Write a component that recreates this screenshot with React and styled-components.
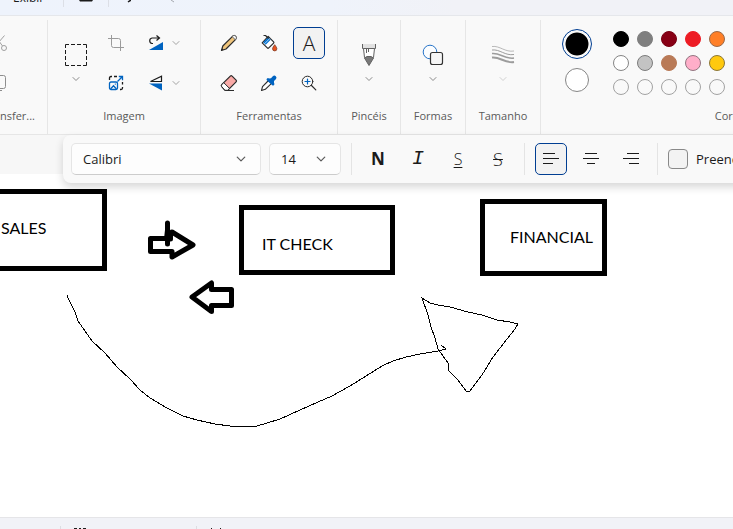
import React from "react";
import styled, { createGlobalStyle } from "styled-components";

const GlobalStyle = createGlobalStyle`
  *, *::before, *::after { box-sizing: border-box; }
  html, body { margin: 0; height: 100%; overflow: hidden; }
  body {
    font-family: "Open Sans", "Noto Sans", sans-serif;
    font-size: 12px;
    color: #1b1b1b;
  }
  button, select, input { font: inherit; color: inherit; margin: 0; }
  svg { display: block; flex: none; }
`;

const Window = styled.div`
  display: flex;
  flex-direction: column;
  height: 100vh;
  overflow: hidden;
  background: #fff;
`;

/* ---------- title strip ---------- */

const MenuStrip = styled.header`
  display: flex;
  align-items: flex-start;
  height: 16px;
  flex: none;
  overflow: hidden;
  border-bottom: 1px solid #e5e7eb;
  background: linear-gradient(90deg, #eef3fc 0%, #eff3fb 45%, #f1f2f7 62%);
`;

const MenuButton = styled.button`
  width: 63px;
  height: 16px;
  margin-top: -10px;
  padding: 0 0 0 13px;
  border: 0;
  background: none;
  line-height: 16px;
  text-align: left;
`;

const StripDivider = styled.span`
  width: 1px;
  height: 7px;
  background: #dcdfe6;
`;

const StripButton = styled.button`
  display: flex;
  justify-content: center;
  width: ${(p) => p.$width || 44}px;
  height: 6px;
  padding: 0;
  border: 0;
  background: none;
  color: ${(p) => (p.$faded ? "#a5a8ae" : "#1b1b1b")};
`;

/* ---------- ribbon ---------- */

const Ribbon = styled.div`
  display: flex;
  flex: none;
  height: 119px;
  padding-top: 4px;
  overflow: hidden;
  border-bottom: 1px solid #e6e6e6;
  background: #f9f9f9;
`;

const Group = styled.section`
  display: flex;
  flex-direction: column;
  align-items: ${(p) => p.$align || "center"};
  flex: none;
  width: ${(p) => p.$width}px;
  padding-top: 3px;
  border-right: 1px solid #e6e6e6;
`;

const GroupBody = styled.div`
  display: grid;
  grid-template-columns: ${(p) => p.$columns};
  grid-template-rows: 40px 40px;
  place-items: center;
`;

const GroupLabel = styled.h2`
  margin: 5px 0 0;
  padding-right: ${(p) => (p.$end ? 12 : 0)}px;
  font-size: 11px;
  font-weight: 400;
  line-height: 16px;
  text-align: center;
  white-space: nowrap;
  color: #5a5a5a;
`;

const ToolButton = styled.button`
  display: flex;
  align-items: center;
  justify-content: center;
  width: ${(p) => (p.$narrow ? 8 : 32)}px;
  height: 32px;
  padding: 0;
  border: ${(p) => (p.$narrow ? 0 : 1)}px solid ${(p) => (p.$active ? "#003e92" : "transparent")};
  border-radius: 5px;
  background: ${(p) => (p.$active ? "#f2f2f2" : "transparent")};
  color: ${(p) => (p.$muted ? "#a2a2a2" : "#1b1b1b")};
`;

const SplitTool = styled.div`
  display: flex;
  justify-self: stretch;
  padding-left: 4px;
`;

const LetterTool = styled.span`
  font-family: "Open Sans", sans-serif;
  font-size: 21px;
  font-weight: 300;
  line-height: 24px;
  color: #1b1b1b;
`;

const TallButton = styled.button`
  display: flex;
  flex-direction: column;
  align-items: center;
  justify-content: flex-start;
  gap: 8px;
  grid-row: 1 / 3;
  width: 40px;
  height: 80px;
  padding: 20px 0 0;
  border: 0;
  background: none;
  color: ${(p) => (p.$faded ? "#d0d0d0" : "#8a8a8a")};
`;

const ColorArea = styled.div`
  display: flex;
  align-items: flex-start;
  gap: 20px;
  height: 80px;
  padding: 5px 0 0 20px;
`;

const ActiveColors = styled.div`
  display: flex;
  flex-direction: column;
  align-items: center;
  gap: 9px;
  width: 32px;
  padding-top: 1px;
`;

const Primary = styled.button`
  width: 30px;
  height: 30px;
  padding: 2px;
  border: 1px solid #003e92;
  border-radius: 50%;
  background: #000 content-box;
  background-color: #fff;
  background-image: radial-gradient(circle, #000 11px, #fff 12px);
`;

const Secondary = styled.button`
  width: 24px;
  height: 24px;
  padding: 0;
  border: 1px solid #868686;
  border-radius: 50%;
  background: #fff;
`;

const Palette = styled.div`
  display: grid;
  grid-template-columns: repeat(5, 16px);
  gap: 8px;
  padding-top: 3px;
`;

const Swatch = styled.button`
  width: 16px;
  height: 16px;
  padding: 0;
  border: 1px solid ${(p) => p.$ring || "#a2a2a2"};
  border-radius: 50%;
  background: ${(p) => p.$color || "transparent"};
`;

/* ---------- workspace ---------- */

const Workspace = styled.main`
  position: relative;
  display: flex;
  flex-direction: column;
  flex: 1;
  min-height: 0;
  padding-top: 39px;
  background: #f7f7f7;
`;

const TextBar = styled.div`
  position: absolute;
  z-index: 2;
  top: 0;
  left: 63px;
  right: -40px;
  display: flex;
  align-items: center;
  gap: 8px;
  height: 48px;
  padding-left: 8px;
  border-radius: 8px;
  background: #f9f9f9;
  box-shadow: 0 4px 9px rgba(0, 0, 0, 0.16);
`;

const SelectBox = styled.label`
  display: grid;
  align-items: center;
  flex: none;
  width: ${(p) => p.$width}px;
  height: 32px;
  border: 1px solid #e5e5e5;
  border-bottom-color: #cccccc;
  border-radius: 5px;
  background: #fdfdfd;

  select, svg { grid-area: 1 / 1; }
  select {
    width: 100%;
    height: 30px;
    padding: 0 0 0 11px;
    border: 0;
    appearance: none;
    background: none;
    font-size: 13px;
  }
  svg {
    justify-self: end;
    margin-right: 14px;
    color: #5c5c5c;
    pointer-events: none;
  }
`;

const Divider = styled.span`
  flex: none;
  width: 1px;
  height: 32px;
  margin: 0 2px;
  background: #e4e4e4;
`;

const FormatLetter = styled.span`
  font-family: ${(p) => p.$family || '"Open Sans", sans-serif'};
  font-size: ${(p) => p.$size || 17}px;
  font-weight: ${(p) => p.$weight || 300};
  font-style: ${(p) => (p.$italic ? "italic" : "normal")};
  line-height: 20px;
  text-decoration: ${(p) => p.$line || "none"};
  text-decoration-thickness: 1px;
  text-underline-offset: 2px;
`;

const FillOption = styled.label`
  display: flex;
  align-items: center;
  gap: 8px;
  flex: none;
  font-size: 13px;
  line-height: 20px;

  input {
    width: 20px;
    height: 20px;
    appearance: none;
    border: 1px solid #898989;
    border-radius: 4px;
    background: #f3f3f3;
  }
`;

const Canvas = styled.div`
  position: relative;
  flex: 1;
  overflow: hidden;
  background: #fff;
`;

const Node = styled.div`
  position: absolute;
  top: ${(p) => p.$y}px;
  left: ${(p) => p.$x}px;
  width: ${(p) => p.$w}px;
  height: ${(p) => p.$h}px;
  padding: ${(p) => p.$pad};
  border: 5px solid #000;
  color: #000;
  font-family: Lato, sans-serif;
  font-size: 16px;
  line-height: 20px;
  white-space: nowrap;
`;

const Strokes = styled.svg`
  position: absolute;
  top: 0;
  left: 0;
  fill: none;
  stroke: #000;
`;

const StatusBar = styled.footer`
  display: flex;
  align-items: flex-end;
  flex: none;
  height: 12px;
  border-top: 1px solid #e5e5e8;
  background: #f1f2f7;
`;

const StatusCell = styled.div`
  display: flex;
  align-items: flex-end;
  flex: ${(p) => (p.$width ? `0 0 ${p.$width}px` : "1")};
  height: 3px;
  padding-left: 13px;
  border-right: ${(p) => (p.$width ? "1px solid #dcdde2" : "0")};
`;

/* ---------- icons ---------- */

const Chevron = ({ size = 8 }) => (
  <svg width={size} height={size} viewBox="0 0 8 8" fill="none" stroke="currentColor" strokeLinecap="round" strokeLinejoin="round">
    <path d="M1 2.5 4 5.5 7 2.5" />
  </svg>
);

const SelectionIcon = () => (
  <svg width="24" height="24" viewBox="0 0 24 24" fill="none" stroke="#1b1b1b">
    <path d="M1.5 5V1.5H5M7 1.5h4M13 1.5h4M19 1.5h3.500V5M22.500 7v4M22.500 13v4M22.500 19v3.500H19M17 22.500h-4M11 22.500H7M5 22.500H1.500V19M1.500 17v-4M1.500 11V7" />
  </svg>
);

const CropIcon = () => (
  <svg width="16" height="16" viewBox="0 0 16 16" fill="none" stroke="#9b9b9b">
    <path d="M0 3.500h10.500q2 0 2 2V16M3.500 0v10.500q0 2 2 2H16" />
  </svg>
);

const ResizeIcon = () => (
  <svg width="16" height="16" viewBox="0 0 16 16" fill="none">
    <path d="M1.500 5V3q0-1.500 1.500-1.500h1M6 1.500h3M14.500 7v2.500M14.500 12v1q0 1.500-1.500 1.500h-1" stroke="#1b1b1b" strokeWidth="1.300" />
    <rect x="1.500" y="7" width="8" height="7.500" rx="1.500" stroke="#0063c0" strokeWidth="1.300" />
    <path d="m2.500 14 3-3.200 3 3.200M6.800 9.200h1M9.500 6.500l5-5M10.800 1.500h3.700v3.700" stroke="#0063c0" strokeWidth="1.300" />
  </svg>
);

const RotateIcon = () => (
  <svg width="16" height="16" viewBox="0 0 16 16" fill="none">
    <path d="M5 8.500H4a2.800 2.800 0 0 1 0-5.500h7.500M8.500.5l3 2.500-3 2.500" stroke="#1b1b1b" strokeWidth="1.200" />
    <path d="M15 7v8H1z" fill="#0063c0" />
  </svg>
);

const FlipIcon = () => (
  <svg width="16" height="16" viewBox="0 0 16 16" fill="none">
    <path d="M13.500 1.200v5.300h-11z" stroke="#1b1b1b" strokeWidth="1.200" />
    <path d="M14 8.500v7L1 8.500z" fill="#0063c0" />
  </svg>
);

const PencilIcon = () => (
  <svg width="18" height="18" viewBox="0 0 18 18" strokeLinejoin="round">
    <path d="m1.500 16.500 1.300-4.500L12.500 2.300q1.500-1.400 3 0t.2 3L6 15z" fill="#f0c57c" stroke="#2b2b2b" strokeWidth="1.200" />
    <path d="m12.200 2.700 1-1q1.300-.8 2.500.4t.5 2.500l-1 1z" fill="#f7f7f7" stroke="#6a6a6a" />
    <path d="m1.500 16.500.8-2.300 1.400 1.400z" fill="#2b2b2b" />
  </svg>
);

const BucketIcon = () => (
  <svg width="18" height="18" viewBox="0 0 18 18" fill="none" strokeLinejoin="round">
    <path d="m8.200 2.400 5.400 5.400q.6.700 0 1.300L8.800 13.900q-.8.700-1.500 0L2.200 8.800z" fill="#fff" stroke="#2b2b2b" strokeWidth="1.200" />
    <path d="m3.200 8.300 5-5L10.700 5.800l-5 5z" fill="#0070cf" />
    <path d="m4.600 9.700 5-5" stroke="#d7ecff" strokeWidth=".8" />
    <path d="M3.500 1.500h2l3 3" stroke="#2b2b2b" strokeWidth="1.200" />
    <path d="M14.700 10.700q2.200 2.800 2.200 4a2.200 2.200 0 0 1-4.400 0q0-1.200 2.200-4z" fill="#e85420" stroke="#74341f" strokeWidth=".7" />
  </svg>
);

const EraserIcon = () => (
  <svg width="18" height="18" viewBox="0 0 18 18" strokeLinejoin="round">
    <path d="m1.700 10.700 8.600-8.600q.9-.8 1.800 0l4 4q.9.900 0 1.800l-8.400 8.400H5l-3.300-3.700q-.7-.9 0-1.900z" fill="#f9aaa7" stroke="#2b2b2b" strokeWidth="1.200" />
    <path d="m3.800 8.700 5.700 5.700-2 1.900H5l-3.300-3.700q-.7-.9 0-1.900z" fill="#fff" stroke="#2b2b2b" />
    <path d="M6.500 16.500H14" stroke="#2b2b2b" />
  </svg>
);

const DropperIcon = () => (
  <svg width="18" height="18" viewBox="0 0 18 18" strokeLinejoin="round">
    <path d="m8.500 6.500-6 6.200-1 3.800 3.800-1.200 6.200-6z" fill="#fff" stroke="#2b2b2b" strokeWidth="1.100" />
    <path d="M7 4.500q1-1 2 0L11 4.200l1.800-2q1.500-1.500 3 0t0 3L14 7v2q1 1 0 2t-2 0L7 6.500q-1-1 0-2z" fill="#0063c0" />
  </svg>
);

const ZoomIcon = () => (
  <svg width="16" height="16" viewBox="0 0 16 16" fill="none" strokeLinecap="round">
    <circle cx="6.500" cy="6.500" r="5.300" stroke="#2b2b2b" />
    <path d="m10.500 10.500 4.300 4.300" stroke="#2b2b2b" strokeWidth="1.200" />
    <path d="M6.500 4v5M4 6.500h5" stroke="#0063c0" strokeWidth="1.200" />
  </svg>
);

const BrushIcon = () => (
  <svg width="24" height="24" viewBox="0 0 24 24" fill="none" stroke="#626262">
    <path d="M5.500 1v4.500h13V1" fill="#e1e1e1" />
    <path d="m6.500 5.500 1 9h9l1-9z" fill="#fff" />
    <path d="M7.500 15 12 22.500l4.500-7.500-2.500-1.500h-4z" fill="#797979" />
    <path d="M9.500 6v4M11.500 6v3" />
  </svg>
);

const ShapesIcon = () => (
  <svg width="24" height="24" viewBox="0 0 24 24">
    <circle cx="9" cy="9" r="6.800" fill="#fbfdff" stroke="#2673c8" />
    <rect x="9.500" y="9.500" width="12" height="12" rx="2" fill="#f6f6f6" stroke="#333" strokeWidth="1.200" />
  </svg>
);

const ThicknessIcon = () => (
  <svg width="24" height="24" viewBox="0 0 24 24" fill="none" stroke="#9c9c9c">
    <path d="M1 3.500c8-1 13 6 22 4.500" strokeWidth=".7" />
    <path d="M1 7c8-1 13 6 22 4.500" />
    <path d="M1 10.500c8-1 13 6 22 4.500" strokeWidth="1.500" />
    <path d="M1 14.500c8-1 13 6 22 4.500" strokeWidth="2" />
  </svg>
);

const ScissorsIcon = () => (
  <svg width="18" height="18" viewBox="0 0 18 18" fill="none" stroke="#a0a0a0">
    <circle cx="4" cy="14" r="2.500" /><circle cx="14" cy="14" r="2.500" />
    <path d="M5 1.500 12.500 12M14.500 1.500 5.500 12" />
  </svg>
);

const CopyIcon = () => (
  <svg width="18" height="18" viewBox="0 0 18 18" fill="none" stroke="#8d8d8d">
    <rect x="5.500" y="1.500" width="10" height="13" rx="2" /><path d="M5 4.500q-2 0-2 2v8q0 2 2 2h7" />
  </svg>
);

const ALIGN = {
  left: "M1 3.500h12M1 8.500h16M1 13.500h10",
  center: "M3 3.500h12M1 8.500h16M5 13.500h8",
  right: "M5 3.500h12M1 8.500h16M7 13.500h10",
};

const AlignIcon = ({ side }) => (
  <svg width="18" height="18" viewBox="0 0 18 18" stroke="currentColor">
    <path d={ALIGN[side]} />
  </svg>
);

/* ---------- data ---------- */

const SWATCHES = [
  ["preto", "#000000", "#000000"],
  ["cinza", "#7f7f7f", "#7f7f7f"],
  ["vermelho escuro", "#880015", "#770012"],
  ["vermelho", "#ed1c24", "#ed1c24"],
  ["laranja", "#ff7f27", "#9a6949"],
  ["branco", "#ffffff", "#858585"],
  ["cinza claro", "#c3c3c3", "#7c7c7c"],
  ["marrom", "#b97a57", "#b97a57"],
  ["rosa", "#ffaec9", "#927580"],
  ["ouro", "#ffc90e", "#8c7739"],
  ["livre 1"], ["livre 2"], ["livre 3"], ["livre 4"], ["livre 5"],
];

const TALL_GROUPS = [
  { label: "Pincéis", width: 63, Icon: BrushIcon },
  { label: "Formas", width: 65, Icon: ShapesIcon },
  { label: "Tamanho", width: 75, Icon: ThicknessIcon, faded: true },
];

const CURVE =
  "M67 295L68 298 71 304 75 312 78 321 85 331 92 341 105 353 117 367 130 379 140 390 150 398 167 408 183 416 197 420 215 424 230 426H257L267 423 280 419 300 410 318 402 332 396 350 386 366 376 382 366 393 361 406 357 420 354 438 351 446 349 441 345";

const TRIANGLE =
  "M422 298L430 303 438 305 450 307 468 312 482 315 497 320 510 322 518 324 515 329 507 339 493 357 482 375 473 387 470 391H466L458 380 449 371 448 363 438 349 435 338 431 327 428 315z";

export default function App() {
  return (
    <Window>
      <GlobalStyle />
      <MenuStrip>
        <MenuButton>Exibir</MenuButton>
        <StripDivider />
        <StripButton aria-label="Salvar">
          <svg width="14" height="3" viewBox="0 0 14 3"><path d="M0 0h14L13 1.500H1z" fill="currentColor" /></svg>
        </StripButton>
        <StripDivider />
        <StripButton aria-label="Desfazer" $width={40}>
          <svg width="4" height="3" viewBox="0 0 4 3"><path d="M4 0 1 2" stroke="currentColor" strokeWidth="1.500" /></svg>
        </StripButton>
        <StripButton aria-label="Refazer" $faded $width={48}>
          <svg width="4" height="3" viewBox="0 0 4 3"><path d="m0 0 3 2" stroke="currentColor" /></svg>
        </StripButton>
      </MenuStrip>

      <Ribbon>
        <Group $width={48} $align="flex-end">
          <GroupBody $columns="96px">
            <ToolButton aria-label="Recortar"><ScissorsIcon /></ToolButton>
            <ToolButton aria-label="Copiar"><CopyIcon /></ToolButton>
          </GroupBody>
          <GroupLabel $end>Área de Transfer...</GroupLabel>
        </Group>

        <Group $width={153}>
          <GroupBody $columns="40px 40px 56px">
            <TallButton aria-label="Seleção"><SelectionIcon /><Chevron /></TallButton>
            <ToolButton aria-label="Cortar"><CropIcon /></ToolButton>
            <SplitTool>
              <ToolButton aria-label="Girar"><RotateIcon /></ToolButton>
              <ToolButton aria-label="Opções de girar" $narrow $muted><Chevron /></ToolButton>
            </SplitTool>
            <ToolButton aria-label="Redimensionar"><ResizeIcon /></ToolButton>
            <SplitTool>
              <ToolButton aria-label="Inverter"><FlipIcon /></ToolButton>
              <ToolButton aria-label="Opções de inverter" $narrow $muted><Chevron /></ToolButton>
            </SplitTool>
          </GroupBody>
          <GroupLabel>Imagem</GroupLabel>
        </Group>

        <Group $width={137}>
          <GroupBody $columns="40px 40px 40px">
            <ToolButton aria-label="Lápis"><PencilIcon /></ToolButton>
            <ToolButton aria-label="Preencher com cor"><BucketIcon /></ToolButton>
            <ToolButton aria-label="Texto" $active><LetterTool>A</LetterTool></ToolButton>
            <ToolButton aria-label="Borracha"><EraserIcon /></ToolButton>
            <ToolButton aria-label="Seletor de cores"><DropperIcon /></ToolButton>
            <ToolButton aria-label="Lupa"><ZoomIcon /></ToolButton>
          </GroupBody>
          <GroupLabel>Ferramentas</GroupLabel>
        </Group>

        {TALL_GROUPS.map(({ label, width, Icon, faded }) => (
          <Group key={label} $width={width}>
            <GroupBody $columns="40px">
              <TallButton aria-label={label} $faded={faded}><Icon /><Chevron /></TallButton>
            </GroupBody>
            <GroupLabel>{label}</GroupLabel>
          </Group>
        ))}

        <Group $width={378} $align="stretch">
          <ColorArea>
            <ActiveColors>
              <Primary aria-label="Cor 1" />
              <Secondary aria-label="Cor 2" />
            </ActiveColors>
            <Palette>
              {SWATCHES.map(([name, color, ring]) => (
                <Swatch key={name} aria-label={name} $color={color} $ring={ring} />
              ))}
            </Palette>
          </ColorArea>
          <GroupLabel>Cores</GroupLabel>
        </Group>
      </Ribbon>

      <Workspace>
        <TextBar>
          <SelectBox $width={190}>
            <select aria-label="Fonte" defaultValue="Calibri"><option>Calibri</option></select>
            <Chevron size={10} />
          </SelectBox>
          <SelectBox $width={72}>
            <select aria-label="Tamanho da fonte" defaultValue="14"><option>14</option></select>
            <Chevron size={10} />
          </SelectBox>
          <Divider />
          <ToolButton aria-label="Negrito"><FormatLetter $weight={700}>N</FormatLetter></ToolButton>
          <ToolButton aria-label="Itálico"><FormatLetter $italic $size={20} $family='"Liberation Mono", monospace'>I</FormatLetter></ToolButton>
          <ToolButton aria-label="Sublinhado"><FormatLetter $line="underline" $size={16}>S</FormatLetter></ToolButton>
          <ToolButton aria-label="Tachado"><FormatLetter $line="line-through" $size={18}>S</FormatLetter></ToolButton>
          <Divider />
          <ToolButton aria-label="Alinhar à esquerda" $active><AlignIcon side="left" /></ToolButton>
          <ToolButton aria-label="Centralizar"><AlignIcon side="center" /></ToolButton>
          <ToolButton aria-label="Alinhar à direita"><AlignIcon side="right" /></ToolButton>
          <Divider />
          <FillOption><input type="checkbox" />Preencher</FillOption>
        </TextBar>

        <Canvas>
          <Node $x={-60} $y={15} $w={167} $h={82} $pad="24px 0 0 56px">SALES</Node>
          <Node $x={239} $y={31} $w={156} $h={70} $pad="24px 0 0 18px">IT CHECK</Node>
          <Node $x={480} $y={25} $w={127} $h={77} $pad="23px 0 0 25px">FINANCIAL</Node>
          <Strokes width="733" height="343" viewBox="0 174 733 343" aria-hidden="true">
            <path d={CURVE} shapeRendering="crispEdges" />
            <path d={TRIANGLE} shapeRendering="crispEdges" />
            <g strokeWidth="5" strokeLinejoin="round" strokeLinecap="round">
              <path d="M150.500 238.500H167L172 232l21 13-21 12v-5.500h-21.500z" />
              <path d="M167.500 223v21M167.500 230l3 5v4h-4z" />
              <path d="M192 297l19.500-14v6.500h20v16h-20v6z" />
            </g>
          </Strokes>
        </Canvas>
      </Workspace>

      <StatusBar>
        <StatusCell $width={61} />
        <StatusCell $width={136}>
          <svg width="12" height="1" viewBox="0 0 12 1"><path d="M0 .5h3M5 .5h2M9 .5h3" stroke="#1b1b1b" /></svg>
        </StatusCell>
        <StatusCell>
          <svg width="12" height="1" viewBox="0 0 12 1"><path d="M1 .5h1M10 .5h1" stroke="#1b1b1b" /></svg>
        </StatusCell>
      </StatusBar>
    </Window>
  );
}
